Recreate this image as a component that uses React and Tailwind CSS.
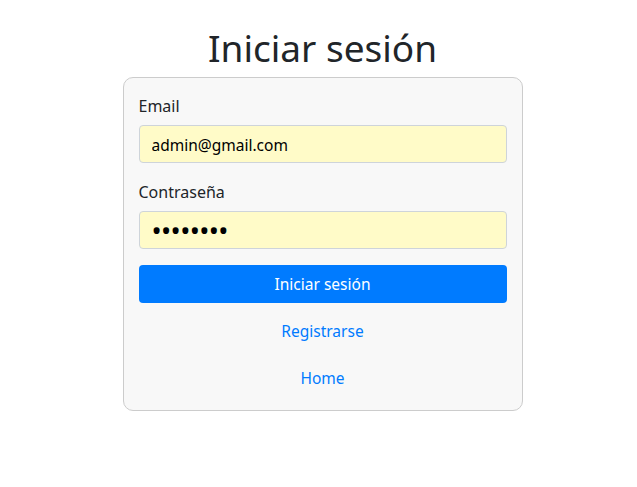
import React, { useState } from 'react'

const App = () => {
    const [email, setEmail] = useState('admin@gmail.com')
    const [password, setPassword] = useState('12345678')

    return (
        <div className="min-h-screen bg-white flex flex-col items-center pt-[24px] pl-[8px] text-[#212529]" style={{ fontFamily: '"Noto Sans", "Open Sans", sans-serif' }}>
            <h1 className="text-[37px] leading-[48px] font-normal mb-[5px]">Iniciar sesión</h1>

            <div className="w-[400px] bg-[#f8f8f8] border border-[#cccccc] rounded-[10px] px-[15px] pt-[15px] pb-[13px]">
                {/* Email */}
                <div className="mb-4">
                    <label className="block text-base leading-6 pt-[1px] mb-[7px]">Email</label>
                    <input
                        type="email"
                        value={email}
                        onChange={(e) => setEmail(e.target.value)}
                        className="w-full h-[38px] px-3 pt-[1px] bg-[#fffbc8] border border-[#ced4da] rounded text-[15.5px] text-black outline-none"
                    />
                </div>

                {/* Password */}
                <div className="mb-4">
                    <label className="block text-base leading-6 pt-[1px] mb-[7px]">Contraseña</label>
                    <input
                        type="password"
                        value={password}
                        onChange={(e) => setPassword(e.target.value)}
                        className="w-full h-[38px] px-3 pt-[3px] bg-[#fffbc8] border border-[#ced4da] rounded text-[27px] tracking-[-0.6px] text-black outline-none"
                    />
                </div>

                <button className="w-full h-[38px] pt-[2px] bg-[#007bff] text-white rounded text-[15.5px]">
                    Iniciar sesión
                </button>

                <button className="block w-full h-[38px] pt-[2px] mt-[9px] text-[#007bff] text-[15.5px]">
                    Registrarse
                </button>
                <button className="block w-full h-[38px] pt-[2px] mt-[9px] text-[#007bff] text-[15.5px]">
                    Home
                </button>
            </div>
        </div>
    )
}

export default App
